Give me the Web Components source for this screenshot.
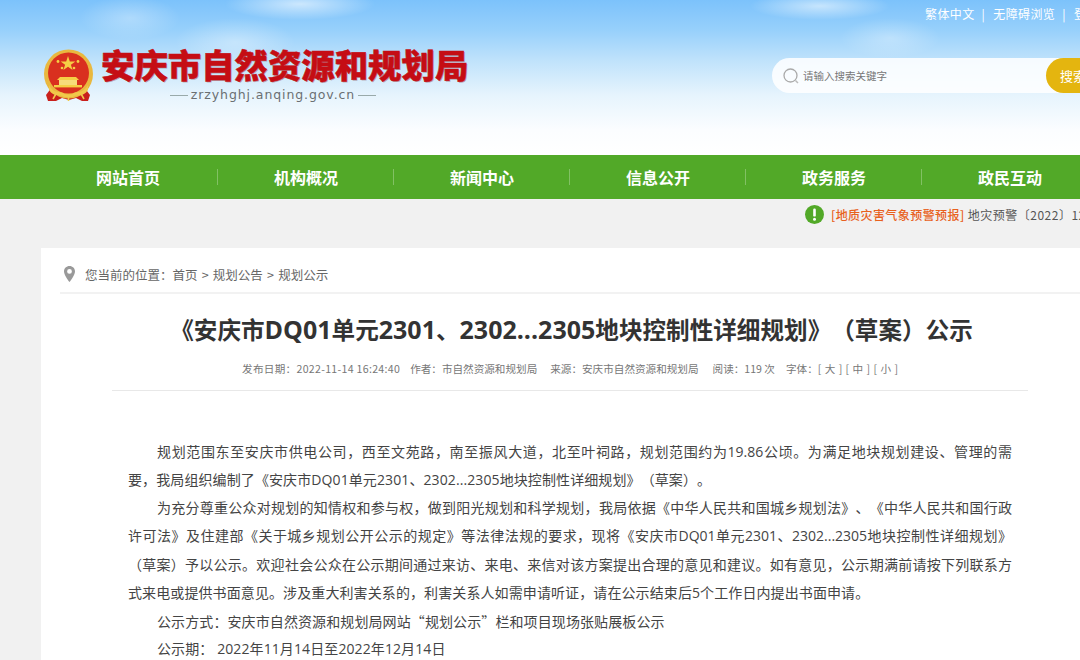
<!DOCTYPE html>
<html lang="zh">
<head>
<meta charset="utf-8">
<title>《安庆市DQ01单元2301、2302...2305地块控制性详细规划》（草案）公示</title>
<style>
  html, body { margin: 0; height: 660px; overflow: hidden; background: #f1f1f1; }
  body { width: 1200px; font-family: "Noto Sans CJK SC", "Liberation Sans", sans-serif; }
</style>
</head>
<body>
<site-header></site-header>
<main-nav>
  <a>网站首页</a><a>机构概况</a><a>新闻中心</a><a>信息公开</a><a>政务服务</a><a>政民互动</a>
</main-nav>
<notice-bar><b>[地质灾害气象预警预报]</b> 地灾预警〔2022〕12号</notice-bar>
<article-card>
  <span slot="crumb">您当前的位置：首页 &gt; 规划公告 &gt; 规划公示</span>
  <span slot="title">《安庆市<lat-run>DQ01</lat-run>单元<lat-run>2301</lat-run>、<lat-run>2302...2305</lat-run>地块控制性详细规划》（草案）公示</span>
  <doc-line indent fill>规划范围东至安庆市供电公司，西至文苑路，南至振风大道，北至叶祠路，规划范围约为19.86公顷。为满足地块规划建设、管理的需</doc-line>
  <doc-line>要，我局组织编制了《安庆市DQ01单元2301、2302...2305地块控制性详细规划》（草案）。</doc-line>
  <doc-line indent fill>为充分尊重公众对规划的知情权和参与权，做到阳光规划和科学规划，我局依据《中华人民共和国城乡规划法》、《中华人民共和国行政</doc-line>
  <doc-line fill>许可法》及住建部《关于城乡规划公开公示的规定》等法律法规的要求，现将《安庆市DQ01单元2301、2302...2305地块控制性详细规划》</doc-line>
  <doc-line fill>（草案）予以公示。欢迎社会公众在公示期间通过来访、来电、来信对该方案提出合理的意见和建议。如有意见，公示期满前请按下列联系方</doc-line>
  <doc-line>式来电或提供书面意见。涉及重大利害关系的，利害关系人如需申请听证，请在公示结束后5个工作日内提出书面申请。</doc-line>
  <doc-line indent cjk>公示方式：安庆市自然资源和规划局网站“规划公示”栏和项目现场张贴展板公示</doc-line>
  <doc-line indent>公示期： 2022年11月14日至2022年12月14日</doc-line>
</article-card>

<script>
class SiteHeader extends HTMLElement {
  connectedCallback() {
    let root = this.attachShadow({mode: 'open'})
    root.innerHTML = `
    <style>
      :host { display: block; height: 155px; overflow: hidden; color: #fff;
        background:
          radial-gradient(ellipse 75px 16px at 300px 4px, rgba(255,255,255,.6), transparent),
          radial-gradient(ellipse 60px 24px at 235px 42px, rgba(255,255,255,.35), transparent),
          radial-gradient(ellipse 50px 22px at 130px 18px, rgba(255,255,255,.3), transparent),
          radial-gradient(ellipse 70px 14px at 820px 6px, rgba(255,255,255,.55), transparent),
          radial-gradient(ellipse 50px 20px at 890px 38px, rgba(255,255,255,.3), transparent),
          linear-gradient(#7cc2fb 0, #97d0fb 30px, #bfe2fb 60px, #e6f4fd 95px, #fbfdff 130px, #fff 155px);
      }
      .links { display: flex; gap: 7px; padding: 5px 0 0 925px; height: 18px; font-size: 12px; line-height: 18px; letter-spacing: .4px; white-space: nowrap; }
      .row { display: flex; padding: 23px 0 0 43px; }
      .emblem { width: 52px; height: 54px; margin-top: 3px; flex: none; }
      .brand { margin-left: 6px; width: 368px; flex: none; }
      .name { font-size: 33.4px; line-height: 36px; height: 36px; font-weight: 900; color: #c50d14; white-space: nowrap;
        -webkit-text-stroke: .5px #c50d14; text-shadow: 1px 1px 0 rgba(120,20,20,.35); }
      .domain { display: flex; align-items: center; justify-content: center; gap: 3px; font: 12.5px/16px "DejaVu Sans", sans-serif; letter-spacing: .9px; color: #6a6f72; margin: 5px 0 0 -24px; }
      .domain i { width: 18px; height: 1px; background: #9aa; }
      .search { display: flex; align-items: center; margin: 12px 0 0 303px; width: 344px; height: 35px; border-radius: 18px; background: rgba(255,255,255,.86); flex: none; }
      .search svg { margin-left: 10px; flex: none; }
      .search span { margin-left: 3px; font-size: 10.5px; color: #777; }
      .search b { margin-left: auto; width: 70px; height: 35px; border-radius: 18px; background: #e4b50f; font-weight: 400; font-size: 13px; line-height: 35px; padding-left: 14px; box-sizing: border-box; }
    </style>
    <div class="links"><span>繁体中文</span><span>|</span><span style="margin-left:1px">无障碍浏览</span><span>|</span><span style="margin-left:1px">登录</span></div>
    <div class="row">
      <svg class="emblem" viewBox="0 0 52 54">
        <path d="M9 38 L3 46 L5 52 L13 52 L19 49 L26 51 L33 49 L39 52 L45 52 L47 46 L41 38Z" fill="#c9201c"/>
        <circle cx="25.5" cy="25" r="24.5" fill="#e9b83f"/>
        <circle cx="25.5" cy="24" r="20.5" fill="#d9301f"/>
        <polygon points="25,7 26.8,12.4 32.4,12.4 27.9,15.7 29.6,21 25,17.8 20.4,21 22.1,15.7 17.6,12.4 23.2,12.4" fill="#f5cf45"/>
        <circle cx="15" cy="12.5" r="1.4" fill="#f5cf45"/><circle cx="35" cy="12.5" r="1.4" fill="#f5cf45"/>
        <circle cx="19" cy="19" r="1.3" fill="#f5cf45"/><circle cx="31" cy="19" r="1.3" fill="#f5cf45"/>
        <path d="M17 28 L33 28 L36 31 L14 31Z" fill="#f5cf45"/>
        <rect x="16" y="31" width="18" height="5" fill="#f7dc7a"/>
        <rect x="11" y="36" width="28" height="2.4" fill="#f5cf45"/>
        <path d="M6 36 C10 45 17 42 20 44 C23 46 28 46 31 44 C34 42 40 45 45 36 L45 41 C40 49 33 45 30 48 L21 48 C18 45 11 49 6 41Z" fill="#f1c94a"/>
        <path d="M14 43 L10 50 M37 43 L41 50 M25.5 46 L25.5 52" stroke="#f1c94a" stroke-width="1.6"/>
      </svg>
      <div class="brand">
        <div class="name">安庆市自然资源和规划局</div>
        <div class="domain"><i></i>zrzyhghj.anqing.gov.cn<i></i></div>
      </div>
      <div class="search">
        <svg width="18" height="18" viewBox="0 0 18 18" fill="none"><circle cx="8.5" cy="8.5" r="6.5" stroke="#aaa" stroke-width="1.3"/><path d="M13.5 13.5 L16 16" stroke="#bbb" stroke-width="1.5"/></svg>
        <span>请输入搜索关键字</span>
        <b>搜索</b>
      </div>
    </div>`
  }
}

class MainNav extends HTMLElement {
  connectedCallback() {
    let root = this.attachShadow({mode: 'open'})
    root.innerHTML = `
    <style>
      :host { display: flex; height: 44px; padding-left: 42px; background: #52a928; color: #fff; font-size: 16px; font-weight: 700; line-height: 44px; white-space: nowrap; }
      ::slotted(a) { display: block; width: 176px; text-align: center; box-sizing: border-box; background: linear-gradient(rgba(255,255,255,.28),rgba(255,255,255,.28)) right 14px / 1px 16px no-repeat; }
      ::slotted(a:first-child) { padding-right: 4px; }
    </style>
    <slot></slot>`
  }
}

class NoticeBar extends HTMLElement {
  connectedCallback() {
    let root = this.attachShadow({mode: 'open'})
    root.innerHTML = `
    <style>
      :host { display: flex; align-items: center; gap: 7px; height: 49px; padding: 0 0 18px 805px; box-sizing: border-box; font-size: 12px; color: #555; letter-spacing: .5px; white-space: nowrap; text-spacing-trim: space-all; }
      ::slotted(b) { color: #e8611d; font-weight: 500; letter-spacing: .42px; }
    </style>
    <svg width="19" height="19" viewBox="0 0 19 19"><circle cx="9.5" cy="9.5" r="9.5" fill="#52a928"/><rect x="8.2" y="3.6" width="2.6" height="8" rx="1.2" fill="#fff"/><circle cx="9.5" cy="14.2" r="1.5" fill="#fff"/></svg>
    <span><slot></slot></span>`
  }
}

class LatRun extends HTMLElement {
  connectedCallback() {
    let root = this.attachShadow({mode: 'open'})
    // no whitespace here, it would show as a gap in the inline text
    root.innerHTML = `<style>:host { display: inline; font-size: 25px; }</style><slot></slot>`
  }
}

class DocLine extends HTMLElement {
  connectedCallback() {
    let root = this.attachShadow({mode: 'open'})
    root.innerHTML = `<style>
      :host { display: block; white-space: nowrap; font-family: "Open Sans", "Noto Sans CJK SC", sans-serif; letter-spacing: .1px; }
      :host([indent]) { text-indent: 29px; }
      :host([cjk]) { font-family: "Noto Sans CJK SC", sans-serif; }
      :host([fill]) { white-space: normal; letter-spacing: 0; text-align: justify; text-align-last: justify; }
    </style><slot></slot>`
  }
}

class ArticleCard extends HTMLElement {
  connectedCallback() {
    let root = this.attachShadow({mode: 'open'})
    root.innerHTML = `
    <style>
      :host { display: block; margin-left: 41px; width: 1120px; height: 412px; background: #fff; box-sizing: border-box; padding: 0 0 0 19px; text-spacing-trim: space-all; }
      .crumb { display: flex; align-items: center; gap: 10px; height: 46px; border-bottom: 2px solid #f2f2f2; padding: 8px 0 0 4px; font-size: 12.5px; word-spacing: 1.4px; color: #666; box-sizing: border-box; white-space: nowrap; }
      .body { padding: 0 52px 0 52px; width: 916px; }
      h1 { margin: 17px 0 0; padding-left: 3px; height: 36px; text-align: center; font-family: "Open Sans", "Noto Sans CJK SC", sans-serif; font-size: 23.6px; line-height: 36px; font-weight: 700; color: #333; white-space: nowrap; }
      .meta { display: flex; justify-content: center; height: 38px; margin-top: 5px; border-bottom: 1px solid #e8e8e8; font-size: 10.6px; line-height: 34px; color: #777; white-space: nowrap; }
      .meta span { margin-right: 13px; }
      .meta span:last-child { margin-right: 0; }
      .text { margin: 47px 0 0 16px; width: 884px; font-size: 14px; line-height: 28.15px; color: #444; }
    </style>
    <div class="crumb">
      <svg width="11" height="16" viewBox="0 0 11 16"><path fill-rule="evenodd" d="M5.5 0 C2.4 0 0 2.4 0 5.4 C0 9 5.5 16 5.5 16 C5.5 16 11 9 11 5.4 C11 2.4 8.6 0 5.5 0Z M5.5 3 A2.4 2.4 0 1 1 5.5 7.8 A2.4 2.4 0 1 1 5.5 3Z" fill="#999"/></svg>
      <slot name="crumb"></slot>
    </div>
    <div class="body">
      <h1><slot name="title"></slot></h1>
      <div class="meta"><span style="letter-spacing:.3px;margin-right:10px">发布日期：2022-11-14 16:24:40</span><span>作者：市自然资源和规划局</span><span style="margin-right:14px">来源：安庆市自然资源和规划局</span><span style="margin-right:11px">阅读：119 次</span><span style="word-spacing:1px">字体：[ 大 ] [ 中 ] [ 小 ]</span></div>
      <div class="text"><slot></slot></div>
    </div>`
  }
}

customElements.define('site-header', SiteHeader)
customElements.define('main-nav', MainNav)
customElements.define('notice-bar', NoticeBar)
customElements.define('lat-run', LatRun)
customElements.define('doc-line', DocLine)
customElements.define('article-card', ArticleCard)
</script>
</body>
</html>
